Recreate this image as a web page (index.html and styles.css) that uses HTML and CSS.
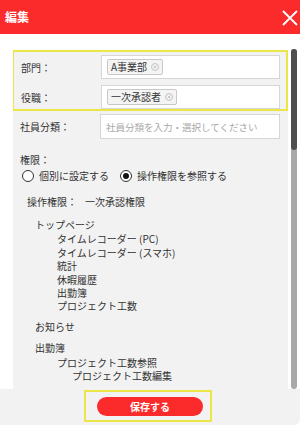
FILE: index.html
```html
<!DOCTYPE html>
<html lang="ja">
<head>
<meta charset="UTF-8">
<meta name="viewport" content="width=device-width, initial-scale=1.0">
<title>編集</title>
<link rel="stylesheet" href="styles.css">
</head>
<body>
<div class="dialog">
    <div class="header">
        <span class="title">編集</span>
        <span class="close">
            <svg width="16" height="16" viewBox="0 0 16 16"><path d="M1 1L15 15M15 1L1 15" stroke="#fff" stroke-width="1.8" fill="none"/></svg>
        </span>
    </div>

    <div class="body">
        <div class="panel">
            <div class="mark group">
                <div class="row">
                    <span class="label">部門：</span>
                    <div class="field">
                        <span class="tag">A事業部<svg class="x" width="8" height="8" viewBox="0 0 8 8"><circle cx="4" cy="4" r="3.5" fill="none" stroke="#c4c4c4"/><path d="M2.5 2.5L5.5 5.5M5.5 2.5L2.5 5.5" stroke="#c4c4c4" stroke-width="0.9"/></svg></span>
                    </div>
                </div>
                <div class="row">
                    <span class="label">役職：</span>
                    <div class="field">
                        <span class="tag">一次承認者<svg class="x" width="8" height="8" viewBox="0 0 8 8"><circle cx="4" cy="4" r="3.5" fill="none" stroke="#c4c4c4"/><path d="M2.5 2.5L5.5 5.5M5.5 2.5L2.5 5.5" stroke="#c4c4c4" stroke-width="0.9"/></svg></span>
                    </div>
                </div>
            </div>

            <div class="row plain">
                <span class="label">社員分類：</span>
                <div class="field tall"><span class="placeholder">社員分類を入力・選択してください</span></div>
            </div>

            <div class="section-label">権限：</div>
            <div class="radios">
                <span class="radio"><span class="dot"></span>個別に設定する</span>
                <span class="radio checked"><span class="dot"></span>操作権限を参照する</span>
            </div>

            <div class="perm"><span class="perm-label">操作権限：</span>一次承認権限</div>

            <ul class="tree">
                <li>トップページ
                    <ul>
                        <li>タイムレコーダー (PC)</li>
                        <li>タイムレコーダー (スマホ)</li>
                        <li>統計</li>
                        <li>休暇履歴</li>
                        <li>出勤簿</li>
                        <li>プロジェクト工数</li>
                    </ul>
                </li>
                <li>お知らせ</li>
                <li>出勤簿
                    <ul>
                        <li>プロジェクト工数参照
                            <ul class="deep">
                                <li>プロジェクト工数編集</li>
                            </ul>
                        </li>
                    </ul>
                </li>
            </ul>
        </div>
        <div class="scrollbar"><div class="thumb"></div></div>
    </div>

    <div class="footer">
        <div class="mark save-wrap">
            <button class="save">保存する</button>
        </div>
    </div>
</div>
</body>
</html>
```

FILE: styles.css
```css
body {
    margin: 0;
    font-family: "Noto Sans CJK JP", "Noto Sans", sans-serif;
    font-size: 10px;
    color: #333;
    background-color: #fff;
}
.dialog {
    width: 300px;
    height: 425px;
    display: flex;
    flex-direction: column;
    overflow: hidden;
    border-bottom-right-radius: 6px;
}
.header {
    height: 34px;
    flex: none;
    background-color: #fc2b2b;
    display: flex;
    align-items: center;
    justify-content: space-between;
    padding: 0 2px 0 5px;
}
.title {
    color: #fff;
    font-size: 12px;
    font-weight: bold;
    margin-top: -2px;
}
.close {
    display: flex;
    margin-top: 2px;
}
.body {
    height: 339px;
    flex: none;
    display: flex;
    padding: 16px 3px 0 13px;
    background-color: #fff;
}
.panel {
    flex: 1;
    background-color: #f2f2f2;
    overflow: hidden;
}
.scrollbar {
    width: 6px;
    margin-left: 3px;
    margin-top: -1px;
    background-color: #a9a9a9;
    border-radius: 3px;
}
.thumb {
    height: 101px;
    background-color: #4f4f4f;
    border-radius: 3px;
}
.mark {
    border: 2px solid #ebe546;
}
.group {
    margin-left: -1px;
    padding: 3px 6px 0 7px;
}
.row {
    display: flex;
    align-items: center;
    margin-bottom: 6px;
}
.row:last-child {
    margin-bottom: 0;
}
.row.plain {
    margin: 3px 0 0;
    padding: 0 8px 0 7px;
}
.label {
    width: 80px;
    flex: none;
}
.field {
    flex: 1;
    height: 22px;
    background-color: #fff;
    border: 1px solid #d6d6d6;
    display: flex;
    align-items: center;
    padding: 0 5px;
}
.field.tall {
    height: 23px;
}
.tag {
    display: inline-flex;
    align-items: center;
    height: 14px;
    padding: 0 3px;
    background-color: #f4f4f4;
    border: 1px solid #c8c8c8;
    border-radius: 2px;
    line-height: 14px;
}
.tag .x {
    margin-left: 4px;
}
.placeholder {
    color: #a8a8a8;
    font-size: 9.5px;
}
.section-label {
    margin: 14px 0 0 7px;
    line-height: 14px;
}
.radios {
    display: flex;
    align-items: center;
    margin: 2px 0 0 9px;
    line-height: 14px;
}
.radio {
    display: inline-flex;
    align-items: center;
    margin-right: 11px;
}
.dot {
    width: 10px;
    height: 10px;
    border: 1px solid #333;
    border-radius: 50%;
    background-color: #fff;
    margin-right: 5px;
    position: relative;
}
.radio.checked .dot::after {
    content: "";
    position: absolute;
    left: 2px;
    top: 2px;
    width: 6px;
    height: 6px;
    border-radius: 50%;
    background-color: #111;
}
.perm {
    margin: 12px 0 0 14px;
    line-height: 14px;
}
.perm-label {
    display: inline-block;
    width: 58px;
}
.tree {
    list-style: none;
    margin: 9px 0 0;
    padding: 0 0 0 22px;
    line-height: 13.4px;
}
.tree li {
    margin-bottom: 7.6px;
}
.tree ul {
    list-style: none;
    margin: 1px 0 0;
    padding-left: 22px;
}
.tree ul li {
    margin-bottom: 0;
}
.tree ul.deep {
    margin-top: 0;
    padding-left: 15px;
}
.footer {
    flex: 1;
    background-color: #f2f2f2;
    display: flex;
    justify-content: center;
    align-items: flex-start;
    padding-top: 1px;
}
.save-wrap {
    padding: 5px 7px 4px 11px;
    margin-left: -4px;
}
.save {
    width: 106px;
    height: 19px;
    border: none;
    border-radius: 10px;
    background-color: #fc2b2b;
    color: #fff;
    font-family: inherit;
    font-size: 10px;
    font-weight: bold;
    padding: 0;
    cursor: pointer;
}
```
